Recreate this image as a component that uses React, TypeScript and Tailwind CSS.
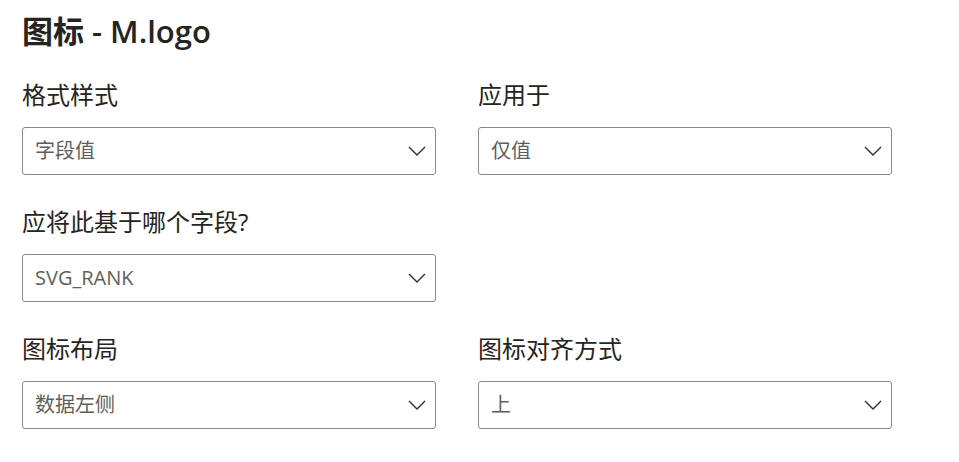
const fieldFont = { fontFamily: '"Open Sans", "Noto Sans CJK SC", sans-serif' };

function Chevron() {
    return (
        <svg width="18" height="10" viewBox="0 0 18 10" fill="none" className="text-[#323130]">
            <path d="M1 1 L9 9 L17 1" stroke="currentColor" strokeWidth="1.4" />
        </svg>
    );
}

function Dropdown({ value }: { value: string }) {
    return (
        <div className="h-[48px] w-[414px] border border-[#8a8886] rounded-[3px] bg-white flex items-center justify-between pl-[12px] pr-[9px]">
            <span className="text-[20px] text-[#605e5c]">{value}</span>
            <Chevron />
        </div>
    );
}

function Field({ label, value }: { label: string; value: string }) {
    return (
        <div className="flex flex-col">
            <label className="text-[24px] leading-[32px] text-[#252423]">{label}</label>
            <div className="mt-[16px]">
                <Dropdown value={value} />
            </div>
        </div>
    );
}

export default function App() {
    return (
        <div className="w-[959px] h-[462px] bg-white pl-[22px] pt-[11px]" style={fieldFont}>
            <h1 className="text-[31px] leading-[40px] font-semibold text-[#252423]">图标 - M.logo</h1>
            <div className="mt-[28px] grid grid-cols-[414px_414px] gap-x-[42px] gap-y-[31px]">
                <Field label="格式样式" value="字段值" />
                <Field label="应用于" value="仅值" />
                <Field label="应将此基于哪个字段?" value="SVG_RANK" />
                <div></div>
                <Field label="图标布局" value="数据左侧" />
                <Field label="图标对齐方式" value="上" />
            </div>
        </div>
    );
}
